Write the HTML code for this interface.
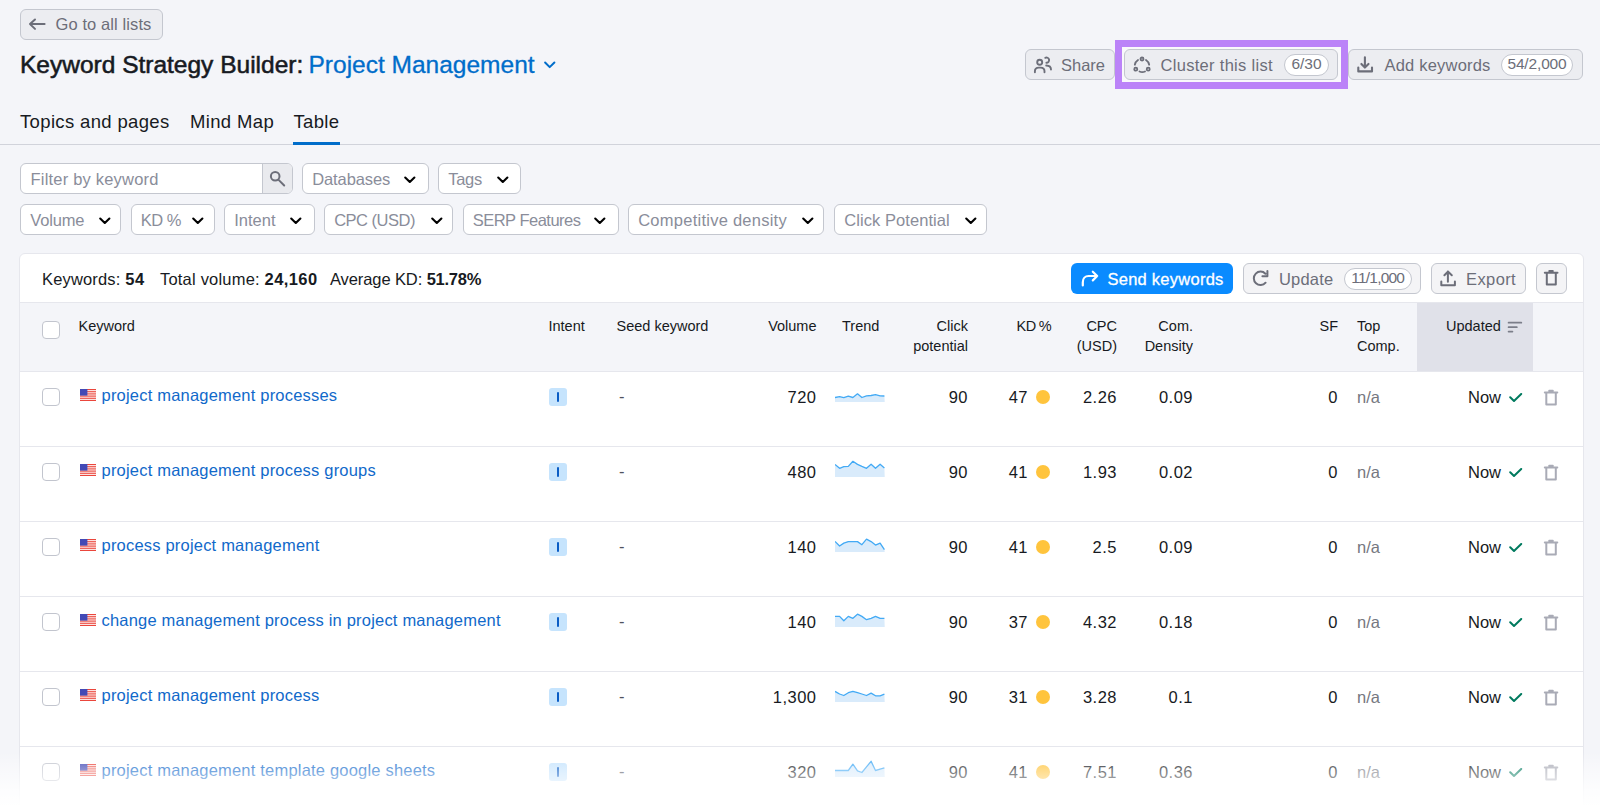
<!DOCTYPE html>
<html><head><meta charset="utf-8">
<style>
*{box-sizing:border-box;margin:0;padding:0}
html,body{width:1600px;height:805px;overflow:hidden;background:#F4F5F9;font-family:"Liberation Sans",sans-serif;color:#171A22}
.a{position:absolute}
.t{position:absolute;white-space:nowrap;line-height:1}
.btn{position:absolute;border:1px solid #C4C7CF;border-radius:6px;background:#ECEDF1;height:31px}
.gt{color:#6C6E79}
.pill{position:absolute;border:1px solid #C4C7CF;border-radius:11px;background:#fff;height:22px;font-size:15.5px;line-height:18.6px;color:#6C6E79;text-align:center}
.flt{position:absolute;height:31px;border:1px solid #C4C7CF;border-radius:6px;background:#fff}
.flt span{position:absolute;left:9.2px;top:6.7px;font-size:16.5px;line-height:1;color:#8A8D9A;white-space:nowrap}
.flt svg{position:absolute;top:10.8px}
.hd{position:absolute;font-size:14.5px;line-height:20px;color:#171A22;white-space:nowrap}
.row{position:absolute;left:20px;width:1563px;height:75px;border-top:1px solid #E6E7ED;background:#fff}
.cb{position:absolute;left:22px;top:16px;width:18px;height:18px;border:1px solid #C2C5CE;border-radius:4px;background:#fff}
.kw{position:absolute;left:81.5px;top:13px;font-size:16.5px;line-height:20px;color:#1169CA;white-space:nowrap;letter-spacing:0.2px}
.v{position:absolute;top:15.3px;font-size:16.5px;letter-spacing:0.5px;line-height:20px;color:#171A22;white-space:nowrap}
.r{text-align:right}
.flag{position:absolute;left:59.7px;top:17px}
.ib{position:absolute;left:529px;top:16px;width:18px;height:18px;border-radius:3px;background:#C6E4FD}
.ib i{position:absolute;left:7.6px;top:4px;width:2.2px;height:10px;background:#0A5CC4;border-radius:1px}
.spark{position:absolute;left:815px;top:8px}
.dot{position:absolute;left:1015.5px;top:18px;width:14px;height:14px;border-radius:50%;background:#FFC43D}
.na{color:#75777F}
.chk{position:absolute;left:1489px;top:20.5px}
.tr{position:absolute;left:1523px;top:16.5px}
</style></head>
<body>
<div class="btn" style="left:20px;top:8.5px;width:143px;height:31px"></div>
<svg class="a" style="left:24px;top:12px" width="26" height="24" viewBox="0 0 26 24"><path d="M11 7.5L6 12.1L11 16.9M6 12.1H20.6" fill="none" stroke="#6C6E79" stroke-width="2" stroke-linecap="round" stroke-linejoin="round"/></svg>
<div class="t gt" style="left:55.5px;top:15.5px;font-size:16.5px;letter-spacing:0.1px">Go to all lists</div>
<div class="t" style="left:20px;top:52.5px;font-size:24.5px;-webkit-text-stroke:0.55px #171A22">Keyword Strategy Builder:</div>
<div class="t" style="left:308.5px;top:52.5px;font-size:24.5px;color:#006DCA;-webkit-text-stroke:0.3px #006DCA">Project Management</div>
<svg class="a" style="left:538px;top:54px" width="24" height="22" viewBox="0 0 24 22"><path d="M7.1 8.5L11.7 13.1L16.4 8.5" fill="none" stroke="#006DCA" stroke-width="2" stroke-linecap="round" stroke-linejoin="round"/></svg>
<div class="t" style="left:20px;top:112.5px;font-size:18.5px;letter-spacing:0.35px">Topics and pages</div>
<div class="t" style="left:190px;top:112.5px;font-size:18.5px;letter-spacing:0.35px">Mind Map</div>
<div class="t" style="left:293.5px;top:112.5px;font-size:18.5px;letter-spacing:0.3px">Table</div>
<div class="a" style="left:0;top:144px;width:1600px;height:1px;background:#D1D3DB"></div>
<div class="a" style="left:293px;top:142px;width:47px;height:3px;background:#006DCA"></div>
<div class="btn" style="left:1025px;top:49px;width:90px"></div>
<svg class="a" style="left:1030px;top:52px" width="26" height="26" viewBox="0 0 26 26"><g fill="none" stroke="#6C6E79" stroke-width="1.9" stroke-linecap="round"><circle cx="9.7" cy="10.3" r="2.5"/><path d="M4.9 20.3V19.3C4.9 17 6.6 15.6 8.8 15.6H10.6C12.8 15.6 14.5 17 14.5 19.3V20.3"/><path d="M15.3 5.8A2.6 2.6 0 1 1 16.4 10.7"/><path d="M16.2 13.5C19 13.6 21 15.2 21 17.6"/></g></svg>
<div class="t gt" style="left:1061px;top:56.5px;font-size:16.5px">Share</div>
<div class="a" style="left:1115px;top:40px;width:233px;height:49px;border:7px solid #BB83F8;background:#F9F9FB"></div>
<div class="btn" style="left:1124px;top:49px;width:214px"></div>
<svg class="a" style="left:1129.7px;top:53.6px" width="24" height="24" viewBox="0 0 24 24"><g fill="none" stroke="#6C6E79" stroke-width="1.8" stroke-linecap="round"><path d="M4.81 10.73A7.3 7.3 0 0 1 8.02 5.88"/><path d="M15.98 5.88A7.3 7.3 0 0 1 19.19 10.73"/><path d="M15 17.5Q12.25 18.7 9.5 17.5"/><circle cx="12" cy="5" r="1.5"/><circle cx="5.78" cy="15.22" r="1.5"/><circle cx="18.22" cy="15.22" r="1.5"/></g></svg>
<div class="t gt" style="left:1160.5px;top:56.5px;font-size:16.5px;letter-spacing:0.3px">Cluster this list</div>
<div class="pill" style="left:1284px;top:54px;width:45px">6/30</div>
<div class="btn" style="left:1348px;top:49px;width:235px"></div>
<svg class="a" style="left:1352px;top:52px" width="26" height="26" viewBox="0 0 26 26"><path d="M12.9 5.2V15.6M9.4 11.9L12.9 15.5L16.5 11.9M6.3 15.6V19.4H20V15.6" fill="none" stroke="#6C6E79" stroke-width="2.1" stroke-linecap="round" stroke-linejoin="round"/></svg>
<div class="t gt" style="left:1384.5px;top:56.5px;font-size:16.5px;letter-spacing:0.2px">Add keywords</div>
<div class="pill" style="left:1501px;top:54px;width:72px;letter-spacing:-0.15px">54/2,000</div>
<div class="a" style="left:20px;top:163px;width:273px;height:31px;border:1px solid #C4C7CF;border-radius:6px;background:#fff;overflow:hidden"><span class="t" style="left:9.5px;top:6.7px;font-size:16.5px;letter-spacing:0.2px;color:#8A8D9A">Filter by keyword</span><div class="a" style="left:241px;top:0;width:31px;height:29px;border-left:1px solid #C4C7CF;background:#E9EAEE"></div></div>
<svg class="a" style="left:262px;top:164px" width="30" height="30" viewBox="0 0 30 30"><circle cx="13.2" cy="12.3" r="4.3" fill="none" stroke="#6C6E79" stroke-width="2"/><path d="M16.6 15.9L22.2 21.5" stroke="#6C6E79" stroke-width="2" stroke-linecap="round"/></svg>
<div class="flt" style="left:302px;top:163px;width:127px"><span style="letter-spacing:-0.1px">Databases</span><svg style="left:100.2px" width="14" height="10" viewBox="0 0 14 10"><path d="M2.2 2.5L6.8 7L11.4 2.5" fill="none" stroke="#000" stroke-width="2.1" stroke-linecap="round" stroke-linejoin="round"/></svg></div>
<div class="flt" style="left:438px;top:163px;width:83px"><span style="letter-spacing:-0.3px">Tags</span><svg style="left:57.0px" width="14" height="10" viewBox="0 0 14 10"><path d="M2.2 2.5L6.8 7L11.4 2.5" fill="none" stroke="#000" stroke-width="2.1" stroke-linecap="round" stroke-linejoin="round"/></svg></div>
<div class="flt" style="left:20px;top:204px;width:101px"><span style="letter-spacing:-0.15px">Volume</span><svg style="left:76.9px" width="14" height="10" viewBox="0 0 14 10"><path d="M2.2 2.5L6.8 7L11.4 2.5" fill="none" stroke="#000" stroke-width="2.1" stroke-linecap="round" stroke-linejoin="round"/></svg></div>
<div class="flt" style="left:130.5px;top:204px;width:84px"><span style="letter-spacing:-0.5px">KD %</span><svg style="left:59.7px" width="14" height="10" viewBox="0 0 14 10"><path d="M2.2 2.5L6.8 7L11.4 2.5" fill="none" stroke="#000" stroke-width="2.1" stroke-linecap="round" stroke-linejoin="round"/></svg></div>
<div class="flt" style="left:224px;top:204px;width:90.5px"><span style="letter-spacing:0px">Intent</span><svg style="left:64.0px" width="14" height="10" viewBox="0 0 14 10"><path d="M2.2 2.5L6.8 7L11.4 2.5" fill="none" stroke="#000" stroke-width="2.1" stroke-linecap="round" stroke-linejoin="round"/></svg></div>
<div class="flt" style="left:324px;top:204px;width:128.5px"><span style="letter-spacing:-0.5px">CPC (USD)</span><svg style="left:104.5px" width="14" height="10" viewBox="0 0 14 10"><path d="M2.2 2.5L6.8 7L11.4 2.5" fill="none" stroke="#000" stroke-width="2.1" stroke-linecap="round" stroke-linejoin="round"/></svg></div>
<div class="flt" style="left:462.5px;top:204px;width:156px"><span style="letter-spacing:-0.5px">SERP Features</span><svg style="left:129.3px" width="14" height="10" viewBox="0 0 14 10"><path d="M2.2 2.5L6.8 7L11.4 2.5" fill="none" stroke="#000" stroke-width="2.1" stroke-linecap="round" stroke-linejoin="round"/></svg></div>
<div class="flt" style="left:628px;top:204px;width:196px"><span style="letter-spacing:0.25px">Competitive density</span><svg style="left:172.0px" width="14" height="10" viewBox="0 0 14 10"><path d="M2.2 2.5L6.8 7L11.4 2.5" fill="none" stroke="#000" stroke-width="2.1" stroke-linecap="round" stroke-linejoin="round"/></svg></div>
<div class="flt" style="left:834px;top:204px;width:153px"><span style="letter-spacing:0.07px">Click Potential</span><svg style="left:129.0px" width="14" height="10" viewBox="0 0 14 10"><path d="M2.2 2.5L6.8 7L11.4 2.5" fill="none" stroke="#000" stroke-width="2.1" stroke-linecap="round" stroke-linejoin="round"/></svg></div>
<div class="a" style="left:19px;top:253px;width:1565px;height:600px;background:#fff;border:1px solid #E6E7ED;border-radius:6px"></div>
<div class="t" style="left:42px;top:270.5px;font-size:16.5px;letter-spacing:0.15px">Keywords: <b style="letter-spacing:0.6px">54</b></div>
<div class="t" style="left:160px;top:270.5px;font-size:16.5px;letter-spacing:0.2px">Total volume: <b style="letter-spacing:0.4px">24,160</b></div>
<div class="t" style="left:330px;top:270.5px;font-size:16.5px;letter-spacing:-0.1px">Average KD: <b style="letter-spacing:-0.25px">51.78%</b></div>
<div class="a" style="left:1071px;top:262.5px;width:162px;height:31.5px;background:#0A8BFF;border-radius:6px"></div>
<svg class="a" style="left:1076px;top:266px" width="26" height="26" viewBox="0 0 26 26"><path d="M6.8 19.4V16.2C6.8 12.6 9.2 10 12.6 10H21.2M16.8 5.7L21.2 10L16.8 14.4" fill="none" stroke="#fff" stroke-width="2.2" stroke-linecap="round" stroke-linejoin="round"/></svg>
<div class="t" style="left:1107.5px;top:270.5px;font-size:16.5px;letter-spacing:0.25px;color:#fff;-webkit-text-stroke:0.3px #fff">Send keywords</div>
<div class="btn" style="left:1242.5px;top:262.5px;width:178.5px;height:31.5px;background:#F4F4F6"></div>
<svg class="a" style="left:1248px;top:265px" width="26" height="26" viewBox="0 0 26 26"><path d="M17.6 17.7A6.7 6.7 0 1 1 17.4 8.7M14.4 11.3H19.4V6.1" fill="none" stroke="#6C6E79" stroke-width="2" stroke-linecap="round" stroke-linejoin="round"/></svg>
<div class="t gt" style="left:1279px;top:270.5px;font-size:16.5px;letter-spacing:0.2px">Update</div>
<div class="pill" style="left:1343.5px;top:267.5px;width:68.5px;letter-spacing:-0.8px">11/1,000</div>
<div class="btn" style="left:1431px;top:262.5px;width:95px;height:31.5px;background:#F4F4F6"></div>
<svg class="a" style="left:1436px;top:265px" width="26" height="26" viewBox="0 0 26 26"><path d="M11.9 6.6V16.8M8.4 10.3L11.9 6.6L15.8 10.3M5.3 16.5V20.2H18.9V16.5" fill="none" stroke="#6C6E79" stroke-width="2" stroke-linecap="round" stroke-linejoin="round"/></svg>
<div class="t gt" style="left:1466px;top:270.5px;font-size:16.5px;letter-spacing:0.4px">Export</div>
<div class="btn" style="left:1536px;top:262.5px;width:30.5px;height:31.5px;background:#F4F4F6"></div>
<svg class="a" style="left:1538px;top:265px" width="26" height="26" viewBox="0 0 26 26"><path d="M8.8 8V19.6H17.8V8M6.8 7.8H19.5M11.3 6.1H14.8" fill="none" stroke="#6C6E79" stroke-width="2" stroke-linecap="round" stroke-linejoin="round"/></svg>
<div class="a" style="left:20px;top:302px;width:1563px;height:1px;background:#E6E7ED"></div>
<div class="a" style="left:20px;top:303px;width:1563px;height:68px;background:#F4F5F9"></div>
<div class="a" style="left:1416.5px;top:303px;width:116.5px;height:68px;background:#E0E1E9"></div>
<div class="a" style="left:42px;top:321px;width:18px;height:18px;border:1px solid #C2C5CE;border-radius:4px;background:#fff"></div>
<div class="hd" style="left:78.5px;top:316px">Keyword</div>
<div class="hd" style="left:548.5px;top:316px">Intent</div>
<div class="hd" style="left:616.5px;top:316px">Seed keyword</div>
<div class="hd r" style="right:783.5px;top:316px">Volume</div>
<div class="hd" style="left:842px;top:316px">Trend</div>
<div class="hd r" style="right:632px;top:316px">Click<br>potential</div>
<div class="hd" style="left:1016.5px;letter-spacing:-0.3px;word-spacing:-1px;top:316px">KD %</div>
<div class="hd r" style="right:483px;top:316px">CPC<br>(USD)</div>
<div class="hd r" style="right:407px;top:316px">Com.<br>Density</div>
<div class="hd r" style="right:262px;top:316px">SF</div>
<div class="hd" style="left:1357px;top:316px">Top<br>Comp.</div>
<div class="hd" style="left:1446px;top:316px">Updated</div>
<svg class="a" style="left:1500px;top:314px" width="30" height="26" viewBox="0 0 30 26"><path d="M8.6 8.7H21.3M8.6 13.2H16.8M8.6 17.6H12.4" stroke="#7B7E89" stroke-width="1.8" stroke-linecap="round"/></svg>
<div class="row" style="top:371px">
<div class="cb"></div>
<svg class="flag" width="16" height="12" viewBox="0 0 16 12"><rect width="16" height="12" fill="#fff"/><g fill="#E9372C"><rect y="0.00" width="16" height="0.92"/><rect y="1.85" width="16" height="0.92"/><rect y="3.69" width="16" height="0.92"/><rect y="5.54" width="16" height="0.92"/><rect y="7.38" width="16" height="0.92"/><rect y="9.23" width="16" height="0.92"/><rect y="11.08" width="16" height="0.92"/></g><rect width="7.4" height="6.6" fill="#4249B5"/></svg>
<div class="kw">project management processes</div>
<div class="ib"><i></i></div>
<div class="v" style="left:599px;top:14px;color:#50535E">-</div>
<div class="v r" style="right:766.5px">720</div>
<svg class="spark" width="50" height="23" viewBox="0 0 50 23"><polygon points="0,22 0.0,17.5 4.6,16.6 8.8,17.7 13.3,16.2 17.9,17.5 22.5,13.8 26.9,17.5 31.5,15.8 36.1,15.5 40.5,14.7 45.1,15.8 49.4,16.0 49.7,22" fill="#D9EBFB"/><polyline points="0.0,17.5 4.6,16.6 8.8,17.7 13.3,16.2 17.9,17.5 22.5,13.8 26.9,17.5 31.5,15.8 36.1,15.5 40.5,14.7 45.1,15.8 49.4,16.0" fill="none" stroke="#43AAF5" stroke-width="1.3" stroke-linejoin="round"/></svg>
<div class="v r" style="right:615px">90</div>
<div class="v r" style="right:555px">47</div>
<div class="dot"></div>
<div class="v r" style="right:466px">2.26</div>
<div class="v r" style="right:390px">0.09</div>
<div class="v r" style="right:245px">0</div>
<div class="v na" style="left:1337px;letter-spacing:0">n/a</div>
<div class="v" style="left:1448px;letter-spacing:0">Now</div>
<svg class="chk" width="14" height="10" viewBox="0 0 14 10"><path d="M1.2 4.2L5 8L12.2 1" fill="none" stroke="#007A5E" stroke-width="2" stroke-linecap="round" stroke-linejoin="round"/></svg>
<svg class="tr" width="16" height="18" viewBox="0 0 16 18"><path d="M3.3 3.8V15.5H12.8V3.8M1.8 3.6H14.3M6.2 1.8H9.8" fill="none" stroke="#A9ABB6" stroke-width="2" stroke-linejoin="round" stroke-linecap="round"/></svg>
</div>
<div class="row" style="top:446px">
<div class="cb"></div>
<svg class="flag" width="16" height="12" viewBox="0 0 16 12"><rect width="16" height="12" fill="#fff"/><g fill="#E9372C"><rect y="0.00" width="16" height="0.92"/><rect y="1.85" width="16" height="0.92"/><rect y="3.69" width="16" height="0.92"/><rect y="5.54" width="16" height="0.92"/><rect y="7.38" width="16" height="0.92"/><rect y="9.23" width="16" height="0.92"/><rect y="11.08" width="16" height="0.92"/></g><rect width="7.4" height="6.6" fill="#4249B5"/></svg>
<div class="kw">project management process groups</div>
<div class="ib"><i></i></div>
<div class="v" style="left:599px;top:14px;color:#50535E">-</div>
<div class="v r" style="right:766.5px">480</div>
<svg class="spark" width="50" height="23" viewBox="0 0 50 23"><polygon points="0,22 0.0,9.4 4.6,13.3 8.8,11.6 13.3,11.4 17.9,6.3 22.5,9.4 26.9,11.4 31.5,13.3 36.1,9.2 40.5,13.3 45.1,9.2 49.4,12.9 49.7,22" fill="#D9EBFB"/><polyline points="0.0,9.4 4.6,13.3 8.8,11.6 13.3,11.4 17.9,6.3 22.5,9.4 26.9,11.4 31.5,13.3 36.1,9.2 40.5,13.3 45.1,9.2 49.4,12.9" fill="none" stroke="#43AAF5" stroke-width="1.3" stroke-linejoin="round"/></svg>
<div class="v r" style="right:615px">90</div>
<div class="v r" style="right:555px">41</div>
<div class="dot"></div>
<div class="v r" style="right:466px">1.93</div>
<div class="v r" style="right:390px">0.02</div>
<div class="v r" style="right:245px">0</div>
<div class="v na" style="left:1337px;letter-spacing:0">n/a</div>
<div class="v" style="left:1448px;letter-spacing:0">Now</div>
<svg class="chk" width="14" height="10" viewBox="0 0 14 10"><path d="M1.2 4.2L5 8L12.2 1" fill="none" stroke="#007A5E" stroke-width="2" stroke-linecap="round" stroke-linejoin="round"/></svg>
<svg class="tr" width="16" height="18" viewBox="0 0 16 18"><path d="M3.3 3.8V15.5H12.8V3.8M1.8 3.6H14.3M6.2 1.8H9.8" fill="none" stroke="#A9ABB6" stroke-width="2" stroke-linejoin="round" stroke-linecap="round"/></svg>
</div>
<div class="row" style="top:521px">
<div class="cb"></div>
<svg class="flag" width="16" height="12" viewBox="0 0 16 12"><rect width="16" height="12" fill="#fff"/><g fill="#E9372C"><rect y="0.00" width="16" height="0.92"/><rect y="1.85" width="16" height="0.92"/><rect y="3.69" width="16" height="0.92"/><rect y="5.54" width="16" height="0.92"/><rect y="7.38" width="16" height="0.92"/><rect y="9.23" width="16" height="0.92"/><rect y="11.08" width="16" height="0.92"/></g><rect width="7.4" height="6.6" fill="#4249B5"/></svg>
<div class="kw">process project management</div>
<div class="ib"><i></i></div>
<div class="v" style="left:599px;top:14px;color:#50535E">-</div>
<div class="v r" style="right:766.5px">140</div>
<svg class="spark" width="50" height="23" viewBox="0 0 50 23"><polygon points="0,22 0.0,11.4 4.6,16.0 8.8,13.1 13.3,11.6 17.9,11.6 22.5,11.6 26.9,14.7 31.5,9.2 36.1,11.6 40.5,15.1 45.1,13.1 49.4,19.7 49.7,22" fill="#D9EBFB"/><polyline points="0.0,11.4 4.6,16.0 8.8,13.1 13.3,11.6 17.9,11.6 22.5,11.6 26.9,14.7 31.5,9.2 36.1,11.6 40.5,15.1 45.1,13.1 49.4,19.7" fill="none" stroke="#43AAF5" stroke-width="1.3" stroke-linejoin="round"/></svg>
<div class="v r" style="right:615px">90</div>
<div class="v r" style="right:555px">41</div>
<div class="dot"></div>
<div class="v r" style="right:466px">2.5</div>
<div class="v r" style="right:390px">0.09</div>
<div class="v r" style="right:245px">0</div>
<div class="v na" style="left:1337px;letter-spacing:0">n/a</div>
<div class="v" style="left:1448px;letter-spacing:0">Now</div>
<svg class="chk" width="14" height="10" viewBox="0 0 14 10"><path d="M1.2 4.2L5 8L12.2 1" fill="none" stroke="#007A5E" stroke-width="2" stroke-linecap="round" stroke-linejoin="round"/></svg>
<svg class="tr" width="16" height="18" viewBox="0 0 16 18"><path d="M3.3 3.8V15.5H12.8V3.8M1.8 3.6H14.3M6.2 1.8H9.8" fill="none" stroke="#A9ABB6" stroke-width="2" stroke-linejoin="round" stroke-linecap="round"/></svg>
</div>
<div class="row" style="top:596px">
<div class="cb"></div>
<svg class="flag" width="16" height="12" viewBox="0 0 16 12"><rect width="16" height="12" fill="#fff"/><g fill="#E9372C"><rect y="0.00" width="16" height="0.92"/><rect y="1.85" width="16" height="0.92"/><rect y="3.69" width="16" height="0.92"/><rect y="5.54" width="16" height="0.92"/><rect y="7.38" width="16" height="0.92"/><rect y="9.23" width="16" height="0.92"/><rect y="11.08" width="16" height="0.92"/></g><rect width="7.4" height="6.6" fill="#4249B5"/></svg>
<div class="kw">change management process in project management</div>
<div class="ib"><i></i></div>
<div class="v" style="left:599px;top:14px;color:#50535E">-</div>
<div class="v r" style="right:766.5px">140</div>
<svg class="spark" width="50" height="23" viewBox="0 0 50 23"><polygon points="0,22 0.0,11.4 4.6,11.4 8.8,15.8 13.3,11.4 17.9,13.3 22.5,9.2 26.9,11.4 31.5,14.7 36.1,13.3 40.5,11.4 45.1,13.3 49.4,13.3 49.7,22" fill="#D9EBFB"/><polyline points="0.0,11.4 4.6,11.4 8.8,15.8 13.3,11.4 17.9,13.3 22.5,9.2 26.9,11.4 31.5,14.7 36.1,13.3 40.5,11.4 45.1,13.3 49.4,13.3" fill="none" stroke="#43AAF5" stroke-width="1.3" stroke-linejoin="round"/></svg>
<div class="v r" style="right:615px">90</div>
<div class="v r" style="right:555px">37</div>
<div class="dot"></div>
<div class="v r" style="right:466px">4.32</div>
<div class="v r" style="right:390px">0.18</div>
<div class="v r" style="right:245px">0</div>
<div class="v na" style="left:1337px;letter-spacing:0">n/a</div>
<div class="v" style="left:1448px;letter-spacing:0">Now</div>
<svg class="chk" width="14" height="10" viewBox="0 0 14 10"><path d="M1.2 4.2L5 8L12.2 1" fill="none" stroke="#007A5E" stroke-width="2" stroke-linecap="round" stroke-linejoin="round"/></svg>
<svg class="tr" width="16" height="18" viewBox="0 0 16 18"><path d="M3.3 3.8V15.5H12.8V3.8M1.8 3.6H14.3M6.2 1.8H9.8" fill="none" stroke="#A9ABB6" stroke-width="2" stroke-linejoin="round" stroke-linecap="round"/></svg>
</div>
<div class="row" style="top:671px">
<div class="cb"></div>
<svg class="flag" width="16" height="12" viewBox="0 0 16 12"><rect width="16" height="12" fill="#fff"/><g fill="#E9372C"><rect y="0.00" width="16" height="0.92"/><rect y="1.85" width="16" height="0.92"/><rect y="3.69" width="16" height="0.92"/><rect y="5.54" width="16" height="0.92"/><rect y="7.38" width="16" height="0.92"/><rect y="9.23" width="16" height="0.92"/><rect y="11.08" width="16" height="0.92"/></g><rect width="7.4" height="6.6" fill="#4249B5"/></svg>
<div class="kw">project management process</div>
<div class="ib"><i></i></div>
<div class="v" style="left:599px;top:14px;color:#50535E">-</div>
<div class="v r" style="right:766.5px">1,300</div>
<svg class="spark" width="50" height="23" viewBox="0 0 50 23"><polygon points="0,22 0.0,11.4 4.6,14.0 8.8,15.5 13.3,12.7 17.9,11.4 22.5,12.7 26.9,14.0 31.5,15.5 36.1,13.1 40.5,15.8 45.1,15.8 49.4,14.2 49.7,22" fill="#D9EBFB"/><polyline points="0.0,11.4 4.6,14.0 8.8,15.5 13.3,12.7 17.9,11.4 22.5,12.7 26.9,14.0 31.5,15.5 36.1,13.1 40.5,15.8 45.1,15.8 49.4,14.2" fill="none" stroke="#43AAF5" stroke-width="1.3" stroke-linejoin="round"/></svg>
<div class="v r" style="right:615px">90</div>
<div class="v r" style="right:555px">31</div>
<div class="dot"></div>
<div class="v r" style="right:466px">3.28</div>
<div class="v r" style="right:390px">0.1</div>
<div class="v r" style="right:245px">0</div>
<div class="v na" style="left:1337px;letter-spacing:0">n/a</div>
<div class="v" style="left:1448px;letter-spacing:0">Now</div>
<svg class="chk" width="14" height="10" viewBox="0 0 14 10"><path d="M1.2 4.2L5 8L12.2 1" fill="none" stroke="#007A5E" stroke-width="2" stroke-linecap="round" stroke-linejoin="round"/></svg>
<svg class="tr" width="16" height="18" viewBox="0 0 16 18"><path d="M3.3 3.8V15.5H12.8V3.8M1.8 3.6H14.3M6.2 1.8H9.8" fill="none" stroke="#A9ABB6" stroke-width="2" stroke-linejoin="round" stroke-linecap="round"/></svg>
</div>
<div class="row" style="top:746px">
<div class="cb"></div>
<svg class="flag" width="16" height="12" viewBox="0 0 16 12"><rect width="16" height="12" fill="#fff"/><g fill="#E9372C"><rect y="0.00" width="16" height="0.92"/><rect y="1.85" width="16" height="0.92"/><rect y="3.69" width="16" height="0.92"/><rect y="5.54" width="16" height="0.92"/><rect y="7.38" width="16" height="0.92"/><rect y="9.23" width="16" height="0.92"/><rect y="11.08" width="16" height="0.92"/></g><rect width="7.4" height="6.6" fill="#4249B5"/></svg>
<div class="kw">project management template google sheets</div>
<div class="ib"><i></i></div>
<div class="v" style="left:599px;top:14px;color:#50535E">-</div>
<div class="v r" style="right:766.5px">320</div>
<svg class="spark" width="50" height="23" viewBox="0 0 50 23"><polygon points="0,22 0.0,15.5 4.6,15.5 8.8,15.5 13.3,15.5 17.9,9.2 22.5,15.8 26.9,17.5 31.5,11.8 36.1,6.3 40.5,15.5 45.1,14.2 49.4,12.9 49.7,22" fill="#D9EBFB"/><polyline points="0.0,15.5 4.6,15.5 8.8,15.5 13.3,15.5 17.9,9.2 22.5,15.8 26.9,17.5 31.5,11.8 36.1,6.3 40.5,15.5 45.1,14.2 49.4,12.9" fill="none" stroke="#43AAF5" stroke-width="1.3" stroke-linejoin="round"/></svg>
<div class="v r" style="right:615px">90</div>
<div class="v r" style="right:555px">41</div>
<div class="dot"></div>
<div class="v r" style="right:466px">7.51</div>
<div class="v r" style="right:390px">0.36</div>
<div class="v r" style="right:245px">0</div>
<div class="v na" style="left:1337px;letter-spacing:0">n/a</div>
<div class="v" style="left:1448px;letter-spacing:0">Now</div>
<svg class="chk" width="14" height="10" viewBox="0 0 14 10"><path d="M1.2 4.2L5 8L12.2 1" fill="none" stroke="#007A5E" stroke-width="2" stroke-linecap="round" stroke-linejoin="round"/></svg>
<svg class="tr" width="16" height="18" viewBox="0 0 16 18"><path d="M3.3 3.8V15.5H12.8V3.8M1.8 3.6H14.3M6.2 1.8H9.8" fill="none" stroke="#A9ABB6" stroke-width="2" stroke-linejoin="round" stroke-linecap="round"/></svg>
</div>
<div class="a" style="left:0;top:752px;width:1600px;height:53px;background:linear-gradient(to bottom,rgba(255,255,255,0) 0%,rgba(255,255,255,0.4) 34%,rgba(255,255,255,0.8) 72%,rgba(255,255,255,0.97) 100%)"></div>
</body></html>
